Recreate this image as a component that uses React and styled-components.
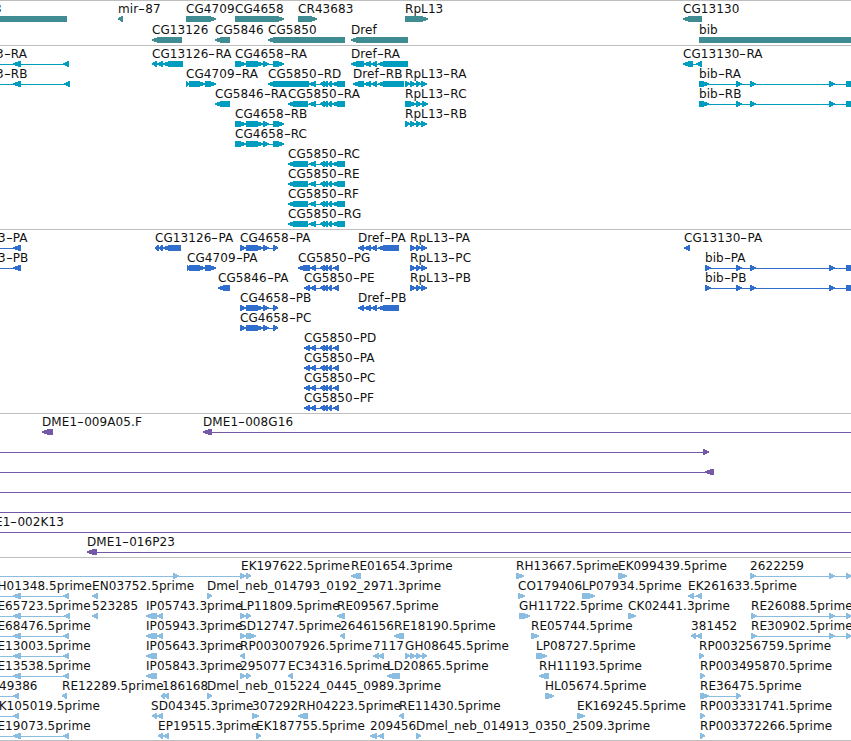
import React from 'react'
import styled, { createGlobalStyle } from 'styled-components'

const WIDTH = 851

// exons shared between transcripts
const CG4658 = [[235, 246], [246, 263], [263, 269], [273, 284]]
const CG4658P = [[240, 246], [246, 263], [263, 269], [273, 278]]
const CG5850_TAIL = [[309, 316], [320, 325], [324, 328], [328, 332], [332, 345]]
const CG5850P_TAIL = [[310, 316], [320, 325], [324, 328], [328, 332], [333, 339]]
const CG5850 = [[288, 308], ...CG5850_TAIL]
const CG5850P = [[304, 310], ...CG5850P_TAIL]
const BIB = [[699, 709], [736, 742], [750, 756], [829, 835], [846, 860]]
const BIBP = [[705, 711], [736, 742], [750, 756], [829, 835], [846, 860]]
const RPL13P = [[410, 416], [416, 421], [421, 427]]
const LEFT_EST = [[-40, -30], [13, 21], [63, 69]]
const LEFT_EST2 = [[-40, -30], [13, 21], [64, 70]]

// feature: label, label x, blocks as [start, end]
const L = (label, x, blocks) => ({ label, x, dir: 'left', blocks })
const R = (label, x, blocks) => ({ label, x, dir: 'right', blocks })

const tracks = [
  {
    name: 'genes',
    color: '#408c93',
    rowHeight: 21,
    end: 2,
    rows: [
      [
        L('3', -6, [[-20, 67]]),
        L('mir-87', 118, [[118, 123]]),
        R('CG4709', 186, [[186, 216]]),
        R('CG4658', 235, [[235, 284]]),
        R('CR43683', 298, [[298, 317]]),
        R('RpL13', 405, [[405, 428]]),
        L('CG13130', 683, [[683, 702]]),
      ],
      [
        L('CG13126', 152, [[152, 182]]),
        L('CG5846', 215, [[215, 230]]),
        L('CG5850', 268, [[268, 345]]),
        L('Dref', 351, [[351, 408]]),
        R('bib', 699, [[699, 880]]),
      ],
    ],
  },
  {
    name: 'transcripts',
    color: '#009dbf',
    end: 3,
    rows: [
      [
        L('3-RA', -4, LEFT_EST),
        L('CG13126-RA', 152, [[152, 157], [157, 163], [163, 183]]),
        R('CG4658-RA', 235, CG4658),
        L('Dref-RA', 351, [[351, 364], [364, 371], [371, 377], [378, 408]]),
        L('CG13130-RA', 683, [[683, 693], [696, 702]]),
      ],
      [
        L('3-RB', -4, LEFT_EST2),
        R('CG4709-RA', 186, [[186, 189], [189, 205], [205, 216]]),
        L('CG5850-RD', 268, [[268, 309], ...CG5850_TAIL]),
        L('Dref-RB', 353, [[353, 364], [364, 371], [371, 377], [378, 404]]),
        R('RpL13-RA', 405, [[405, 410], [410, 416], [416, 421], [421, 427]]),
        R('bib-RA', 699, BIB),
      ],
      [
        L('CG5846-RA', 215, [[215, 230]]),
        L('CG5850-RA', 288, CG5850),
        R('RpL13-RC', 405, [[405, 416], [416, 422], [422, 428]]),
        R('bib-RB', 699, BIB),
      ],
      [
        R('CG4658-RB', 235, CG4658),
        R('RpL13-RB', 405, [[405, 410], [410, 416], [416, 421], [421, 427]]),
      ],
      [R('CG4658-RC', 235, CG4658)],
      [L('CG5850-RC', 288, CG5850)],
      [L('CG5850-RE', 288, CG5850)],
      [L('CG5850-RF', 288, CG5850)],
      [L('CG5850-RG', 288, CG5850)],
    ],
  },
  {
    name: 'proteins',
    color: '#306ecd',
    end: 3,
    rows: [
      [
        L('3-PA', -2, [[-40, -30], [13, 21]]),
        L('CG13126-PA', 155, [[155, 159], [159, 163], [163, 181]]),
        R('CG4658-PA', 240, CG4658P),
        L('Dref-PA', 358, [[358, 364], [364, 371], [371, 377], [378, 399]]),
        R('RpL13-PA', 410, RPL13P),
        L('CG13130-PA', 684, [[684, 690]]),
      ],
      [
        L('3-PB', -2, [[-40, -30], [13, 21]]),
        R('CG4709-PA', 187, [[187, 189], [189, 205], [205, 216]]),
        L('CG5850-PG', 298, [[298, 310], ...CG5850P_TAIL]),
        R('RpL13-PC', 410, RPL13P),
        R('bib-PA', 705, BIBP),
      ],
      [
        L('CG5846-PA', 218, [[218, 230]]),
        L('CG5850-PE', 304, CG5850P),
        R('RpL13-PB', 410, RPL13P),
        R('bib-PB', 705, BIBP),
      ],
      [
        R('CG4658-PB', 240, CG4658P),
        L('Dref-PB', 358, [[358, 364], [364, 371], [371, 377], [378, 399]]),
      ],
      [R('CG4658-PC', 240, CG4658P)],
      [L('CG5850-PD', 304, CG5850P)],
      [L('CG5850-PA', 304, CG5850P)],
      [L('CG5850-PC', 304, CG5850P)],
      [L('CG5850-PF', 304, CG5850P)],
    ],
  },
  {
    name: 'clones',
    color: '#7459a6',
    end: 3,
    rows: [
      [
        L('DME1-009A05.F', 42, [[42, 53]]),
        L('DME1-008G16', 203, [[203, 212], [870, 880]]),
      ],
      [R('', 0, [[-40, -30], [703, 709]])],
      [L('', 0, [[-40, -30], [705, 714]])],
      [R('', 0, [[-40, -30], [870, 880]])],
      [R('', 0, [[-40, -30], [870, 880]])],
      [L('E1-002K13', -5, [[-40, -30], [870, 880]])],
      [L('DME1-016P23', 87, [[87, 97], [870, 880]])],
    ],
  },
  {
    name: 'ests',
    color: '#8abddf',
    end: 2,
    rows: [
      [
        R('EK197622.5prime', 241, [[-40, -30], [173, 179], [240, 246], [246, 251]]),
        L('RE01654.3prime', 351, [[351, 361]]),
        R('RH13667.5prime', 516, [[516, 524]]),
        R('EK099439.5prime', 618, [[618, 627]]),
        R('2622259', 750, [[750, 756], [829, 835], [846, 852]]),
      ],
      [
        L('RH01348.5prime', -11, LEFT_EST),
        L('EN03752.5prime', 92, [[92, 98]]),
        R('Dmel_neb_014793_0192_2971.3prime', 207, [[207, 212]]),
        R('CO179406', 518, [[518, 525]]),
        R('LP07934.5prime', 582, [[582, 595]]),
        L('EK261633.5prime', 688, [[688, 694], [696, 702]]),
      ],
      [
        L('RE65723.5prime', -11, LEFT_EST2),
        L('523285', 92, [[92, 98]]),
        L('IP05743.3prime', 146, [[146, 157], [157, 163]]),
        R('LP11809.5prime', 240, [[240, 246], [246, 251]]),
        L('RE09567.5prime', 337, [[337, 345]]),
        R('GH11722.5prime', 519, [[519, 530]]),
        R('CK02441.3prime', 628, [[628, 636]]),
        R('RE26088.5prime', 751, [[751, 757], [829, 835], [846, 852]]),
      ],
      [
        L('RE68476.5prime', -11, LEFT_EST),
        L('IP05943.3prime', 146, [[146, 157], [157, 163]]),
        R('SD12747.5prime', 239, [[240, 246], [246, 256]]),
        L('2646156', 340, [[340, 345]]),
        L('RE18190.5prime', 394, [[394, 404]]),
        R('RE05744.5prime', 531, [[531, 539]]),
        L('381452', 691, [[691, 696], [696, 702]]),
        R('RE30902.5prime', 751, [[751, 757], [829, 835], [846, 852]]),
      ],
      [
        L('RE13003.5prime', -11, LEFT_EST),
        L('IP05643.3prime', 146, [[146, 157]]),
        L('RP003007926.5prime', 240, [[240, 245]]),
        L('7117', 373, [[373, 379], [378, 384]]),
        R('GH08645.5prime', 405, [[405, 410], [410, 416], [416, 422], [422, 427]]),
        R('LP08727.5prime', 536, [[536, 547]]),
        R('RP003256759.5prime', 699, [[699, 704]]),
      ],
      [
        L('RE13538.5prime', -11, LEFT_EST),
        L('IP05843.3prime', 146, [[146, 157]]),
        R('295077', 240, [[240, 246], [246, 251]]),
        L('EC34316.5prime', 288, [[288, 293]]),
        L('LD20865.5prime', 387, [[387, 400]]),
        L('RH11193.5prime', 539, [[539, 549]]),
        R('RP003495870.5prime', 700, [[700, 705]]),
      ],
      [
        L('49386', -1, [[-40, -30], [13, 19]]),
        L('RE12289.5prime', 62, [[62, 67]]),
        L('186168', 162, [[161, 165], [164, 169]]),
        R('Dmel_neb_015224_0445_0989.3prime', 207, [[207, 212]]),
        R('HL05674.5prime', 545, [[545, 554]]),
        R('RE36475.5prime', 700, [[700, 709], [736, 741]]),
      ],
      [
        L('EK105019.5prime', -9, [[-40, -30], [13, 19]]),
        L('SD04345.3prime', 151, [[152, 157], [157, 163]]),
        R('307292', 252, [[252, 259]]),
        L('RH04223.5prime', 298, [[298, 308]]),
        L('RE11430.5prime', 399, [[399, 404]]),
        R('EK169245.5prime', 577, [[577, 585]]),
        R('RP003331741.5prime', 700, [[700, 705]]),
      ],
      [
        L('RE19073.5prime', -11, LEFT_EST),
        L('EP19515.3prime', 158, [[158, 163], [163, 169]]),
        R('EK187755.5prime', 256, [[256, 261]]),
        L('209456', 370, [[370, 377], [378, 384]]),
        R('Dmel_neb_014913_0350_2509.3prime', 416, [[416, 421]]),
        R('RP003372266.5prime', 700, [[700, 705]]),
      ],
    ],
  },
]

const GlobalStyle = createGlobalStyle`
body{
  margin:0;
  background:#fff;
  overflow:hidden;
}
`

const Browser = styled.main`
width:${WIDTH}px;
height:741px;
overflow:hidden;
display:flex;
flex-direction:column;
font-family:"DejaVu Sans", sans-serif;
font-size:12px;
letter-spacing:0.08px;
color:#111;
border-bottom:1px solid #bebebe;
box-sizing:border-box;
`

const Track = styled.section`
display:flex;
flex-direction:column;
border-top:1px solid #bebebe;
padding-bottom:${({ $end }) => $end}px;
`

const Row = styled.div`
height:${({ $height }) => $height}px;
display:grid;
grid-template-columns:${WIDTH}px;
grid-template-rows:15px 6px;
overflow:visible;
`

// every label shares one grid cell and is pushed along to its start position
const Label = styled.span`
grid-area:1 / 1;
justify-self:start;
margin-top:1px;
margin-left:${({ $x }) => $x}px;
line-height:15px;
white-space:nowrap;
`

// the hyphen is drawn wider than the font's own
const Dash = styled.span`
display:inline-block;
width:7px;
text-align:center;
transform:scaleX(1.6);
`

const Glyphs = styled.svg`
grid-area:2 / 1;
display:block;
width:${WIDTH}px;
height:6px;
fill:${({ $color }) => $color};
shape-rendering:crispEdges;
`

// block with a pointed end, short ones are just the point
const blockPath = ([a, b], dir) => {
  const head = Math.min(b - a - 1, 6)
  const tip = dir === 'left' ? a : b
  const back = dir === 'left' ? b : a
  const s = dir === 'left' ? 1 : -1
  const mid = tip + s * head * 0.5
  const full = tip + s * head
  return `M${tip} 2.2L${mid} 1.1L${full} 0H${back}V6H${full}L${mid} 4.7L${tip} 3.6Z`
}

const Feature = ({ dir, blocks }) => {
  const start = blocks[0][0]
  const end = blocks[blocks.length - 1][1]
  return (
    <g>
      {blocks.length > 1 && <rect x={start} y="3" width={end - start} height="1" />}
      {blocks.map((block) => (
        <path key={block[0]} d={blockPath(block, dir)} />
      ))}
    </g>
  )
}

const Name = ({ text, x }) => {
  const [head, tail] = text.split('-')
  return (
    <Label $x={x}>
      {head}
      {tail && <><Dash>-</Dash>{tail}</>}
    </Label>
  )
}

const App = () => {
  return (
    <>
      <GlobalStyle />
      <Browser>
        {tracks.map((track) => (
          <Track key={track.name} $end={track.end}>
            {track.rows.map((row, i) => (
              <Row key={i} $height={track.rowHeight || 20}>
                {row.map((f) => f.label && (
                  <Name key={f.label} text={f.label} x={f.x} />
                ))}
                <Glyphs $color={track.color} viewBox={`0 0 ${WIDTH} 6`}>
                  {row.map((f) => (
                    <Feature key={f.label} dir={f.dir} blocks={f.blocks} />
                  ))}
                </Glyphs>
              </Row>
            ))}
          </Track>
        ))}
      </Browser>
    </>
  )
}

export default App
